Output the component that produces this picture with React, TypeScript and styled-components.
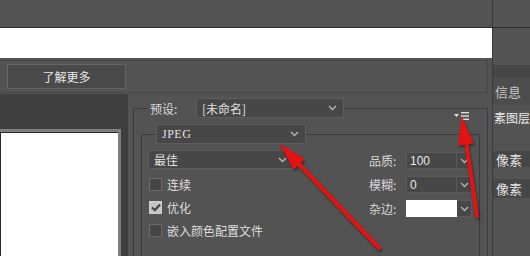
import React from 'react';
import styled, { createGlobalStyle } from 'styled-components';

const GlobalStyle = createGlobalStyle`
  html, body {
    margin: 0;
    padding: 0;
    background: #535353;
    overflow: hidden;
  }
  body {
    font-family: "Noto Sans CJK SC", "Noto Sans", sans-serif;
    color: #dadada;
  }
`;

const Page = styled.div`
  position: relative;
  display: flex;
  width: 530px;
  height: 256px;
  overflow: hidden;
  background: #535353;
`;

const Main = styled.div`
  display: flex;
  flex-direction: column;
  width: 492px;
  flex-shrink: 0;
`;

const TitleBar = styled.div`
  height: 27px;
  border-bottom: 1px solid #2e2e2e;
  flex-shrink: 0;
`;

const WhiteStrip = styled.div`
  height: 30px;
  background: #ffffff;
  flex-shrink: 0;
`;

const Toolbar = styled.div`
  display: flex;
  align-items: center;
  height: 31px;
  margin: 2px 4px 0 0;
  padding-left: 7px;
  border: 1px solid #474747;
  border-left: none;
  flex-shrink: 0;
`;

const Button = styled.div`
  display: flex;
  align-items: center;
  justify-content: center;
  width: 117px;
  height: 23px;
  background: #4a4a4a;
  border: 1px solid #656565;
  font-size: 12px;
  color: #e8e8e8;
`;

const Content = styled.div`
  display: flex;
  flex: 1;
  min-height: 0;
  margin-top: 1px;
`;

const PreviewPane = styled.div`
  display: flex;
  flex-direction: column;
  width: 128px;
  flex-shrink: 0;
  padding-top: 35px;
  background: #3f3f3f;
  box-sizing: border-box;
`;

const PreviewFrame = styled.div`
  flex: 1;
  width: 118px;
  background: #ffffff;
  border-top: 3px solid #7e7e7e;
  border-right: 3px solid #7e7e7e;
  box-shadow: inset 1px 1px 0 #2a2a2a;
`;

const Settings = styled.div`
  flex: 1;
  padding: 4px 4px 0 5px;
  min-width: 0;
`;

const Group = styled.fieldset<{ $pad: number }>`
  position: relative;
  margin: 0;
  padding: ${p => p.$pad}px 5px 0 ${p => (p.$pad === 6 ? 7 : 5)}px;
  border: 1px solid #3b3b3b;
  border-bottom: none;
  min-width: 0;
  height: 100%;
  box-sizing: border-box;
`;

const OuterGroup = styled(Group)`
  padding-right: 7px;
`;

const Legend = styled.legend<{ $offset: number }>`
  display: flex;
  align-items: center;
  margin-left: ${p => p.$offset}px;
  padding: 0;
`;

const LegendLabel = styled.span`
  width: 46px;
  padding-left: 3px;
  font-size: 12px;
  color: #dadada;
`;

const Select = styled.div<{ $w: number; $h: number }>`
  display: flex;
  align-items: center;
  justify-content: space-between;
  width: ${p => p.$w}px;
  height: ${p => p.$h}px;
  box-sizing: border-box;
  padding: 0 6px 0 5px;
  background: #474747;
  border: 1px solid #5d5d5d;
  font-size: 12px;
  color: #e2e2e2;
`;

const SerifText = styled.span`
  font-family: "Liberation Serif", "DejaVu Serif", serif;
  font-size: 12px;
  letter-spacing: 0.5px;
`;

const MenuIcon = styled.div`
  position: absolute;
  top: -7px;
  right: 15px;
  display: flex;
  align-items: center;
  gap: 1px;
  padding: 0 2px;
  background: #535353;
`;

const Body = styled.div`
  display: flex;
  justify-content: space-between;
  padding: 6px 2px 0 1px;
`;

const LeftOptions = styled.div`
  display: flex;
  flex-direction: column;
`;

const CheckList = styled.div`
  display: flex;
  flex-direction: column;
  gap: 10px;
  margin-top: 9px;
  padding-left: 1px;
`;

const CheckRow = styled.div`
  display: flex;
  align-items: center;
  gap: 5px;
  height: 13px;
  font-size: 12px;
  color: #dedede;
`;

const Box = styled.div<{ $checked?: boolean }>`
  display: flex;
  align-items: center;
  justify-content: center;
  width: 13px;
  height: 13px;
  box-sizing: border-box;
  background: ${p => (p.$checked ? '#c4c4c4' : '#454545')};
  border: 1px solid ${p => (p.$checked ? '#d0d0d0' : '#6a6a6a')};
`;

const RightOptions = styled.div`
  display: flex;
  flex-direction: column;
  gap: 7px;
  margin-top: 2px;
`;

const FieldRow = styled.div`
  display: flex;
  align-items: center;
  height: 17px;
`;

const FieldLabel = styled.span`
  width: 37px;
  font-size: 12px;
  color: #d6d6d6;
`;

const Input = styled.div<{ $white?: boolean }>`
  display: flex;
  align-items: center;
  width: 51px;
  height: 17px;
  box-sizing: border-box;
  padding-left: 3px;
  background: ${p => (p.$white ? '#ffffff' : '#474747')};
  border: 1px solid ${p => (p.$white ? '#ffffff' : '#5a5a5a')};
  font-family: "Liberation Sans", Arial, sans-serif;
  font-size: 12px;
  color: #e6e6e6;
`;

const Spin = styled.div`
  display: flex;
  align-items: center;
  justify-content: center;
  width: 15px;
  height: 17px;
  box-sizing: border-box;
  background: #474747;
  border: 1px solid #5a5a5a;
  border-left: none;
`;

const Side = styled.div`
  display: flex;
  flex-direction: column;
  flex: 1;
  border-left: 1px solid #3c3c3c;
  overflow: hidden;
  white-space: nowrap;
`;

const SideTop = styled.div`
  height: 27px;
  border-bottom: 1px solid #2e2e2e;
  flex-shrink: 0;
`;

const SideBlock = styled.div<{ $h: number; $bg: string }>`
  display: flex;
  align-items: center;
  height: ${p => p.$h}px;
  padding-left: 2px;
  flex-shrink: 0;
  background: ${p => p.$bg};
  font-size: 13px;
  color: #c6c6c6;
`;

const SideLabel = styled.div`
  height: 24px;
  padding-left: 1px;
  display: flex;
  align-items: center;
  font-size: 12px;
  color: #ececec;
  flex-shrink: 0;
`;

const UnitBox = styled.div<{ $h: number; $mt: number }>`
  display: flex;
  align-items: center;
  height: ${p => p.$h}px;
  margin-top: ${p => p.$mt}px;
  padding-left: 3px;
  background: #474747;
  font-size: 13px;
  color: #e4e4e4;
  flex-shrink: 0;
`;

const Overlay = styled.svg`
  position: absolute;
  left: 0;
  top: 0;
  pointer-events: none;
  filter: drop-shadow(1px 2px 1px rgba(20, 20, 20, 0.55));
`;

const Chevron = () => (
  <svg width="9" height="6" viewBox="0 0 9 6">
    <path d="M1 1 L4.5 4.5 L8 1" fill="none" stroke="#b8b8b8" strokeWidth="1.3" />
  </svg>
);

const Tick = () => (
  <svg width="10" height="9" viewBox="0 0 10 9">
    <path d="M1 4.5 L3.8 7.2 L9 1.5" fill="none" stroke="#3e3e3e" strokeWidth="2" />
  </svg>
);

const checks = [
  { label: '连续', checked: false },
  { label: '优化', checked: true },
  { label: '嵌入颜色配置文件', checked: false },
];

const fields = [
  { label: '品质:', value: '100' },
  { label: '模糊:', value: '0' },
  { label: '杂边:', value: '', white: true },
];

export default function App() {
  return (
    <Page>
      <GlobalStyle />
      <Main>
        <TitleBar />
        <WhiteStrip />
        <Toolbar>
          <Button>了解更多</Button>
        </Toolbar>
        <Content>
          <PreviewPane>
            <PreviewFrame />
          </PreviewPane>
          <Settings>
            <OuterGroup $pad={6}>
              <Legend $offset={6}>
                <LegendLabel>预设:</LegendLabel>
                <Select $w={148} $h={20}>
                  <span>[未命名]</span>
                  <Chevron />
                </Select>
              </Legend>
              <MenuIcon>
                <svg width="16" height="10" viewBox="0 0 16 10">
                  <path d="M0 3 H5 L2.5 6 Z" fill="#e0e0e0" />
                  <rect x="7" y="1" width="8" height="1.4" fill="#e0e0e0" />
                  <rect x="7" y="4.3" width="8" height="1.4" fill="#e0e0e0" />
                  <rect x="7" y="7.6" width="8" height="1.4" fill="#e0e0e0" />
                </svg>
              </MenuIcon>
              <Group $pad={0}>
                <Legend $offset={9}>
                  <Select $w={150} $h={20}>
                    <SerifText>JPEG</SerifText>
                    <Chevron />
                  </Select>
                </Legend>
                <Body>
                  <LeftOptions>
                    <Select $w={146} $h={19}>
                      <span>最佳</span>
                      <Chevron />
                    </Select>
                    <CheckList>
                      {checks.map(c => (
                        <CheckRow key={c.label}>
                          <Box $checked={c.checked}>{c.checked && <Tick />}</Box>
                          {c.label}
                        </CheckRow>
                      ))}
                    </CheckList>
                  </LeftOptions>
                  <RightOptions>
                    {fields.map(f => (
                      <FieldRow key={f.label}>
                        <FieldLabel>{f.label}</FieldLabel>
                        <Input $white={f.white}>{f.value}</Input>
                        <Spin>
                          <Chevron />
                        </Spin>
                      </FieldRow>
                    ))}
                  </RightOptions>
                </Body>
              </Group>
            </OuterGroup>
          </Settings>
        </Content>
      </Main>
      <Side>
        <SideTop />
        <SideBlock $h={37} $bg="#535353" />
        <SideBlock $h={12} $bg="#464646" />
        <SideBlock $h={28} $bg="#4d4d4d">信息</SideBlock>
        <SideLabel>素图层</SideLabel>
        <UnitBox $h={16} $mt={22}>像素</UnitBox>
        <UnitBox $h={19} $mt={12}>像素</UnitBox>
      </Side>
      <Overlay width="530" height="256" viewBox="0 0 530 256">
        <g fill="#e41212" stroke="#e41212" strokeLinecap="round">
          <line x1="379" y1="248" x2="297" y2="162" strokeWidth="4" />
          <polygon points="281,145 304,159 294,169" strokeWidth="1" />
          <line x1="477" y1="216" x2="466" y2="141" strokeWidth="4" />
          <polygon points="462,118 473,143 459,145" strokeWidth="1" />
        </g>
      </Overlay>
    </Page>
  );
}
